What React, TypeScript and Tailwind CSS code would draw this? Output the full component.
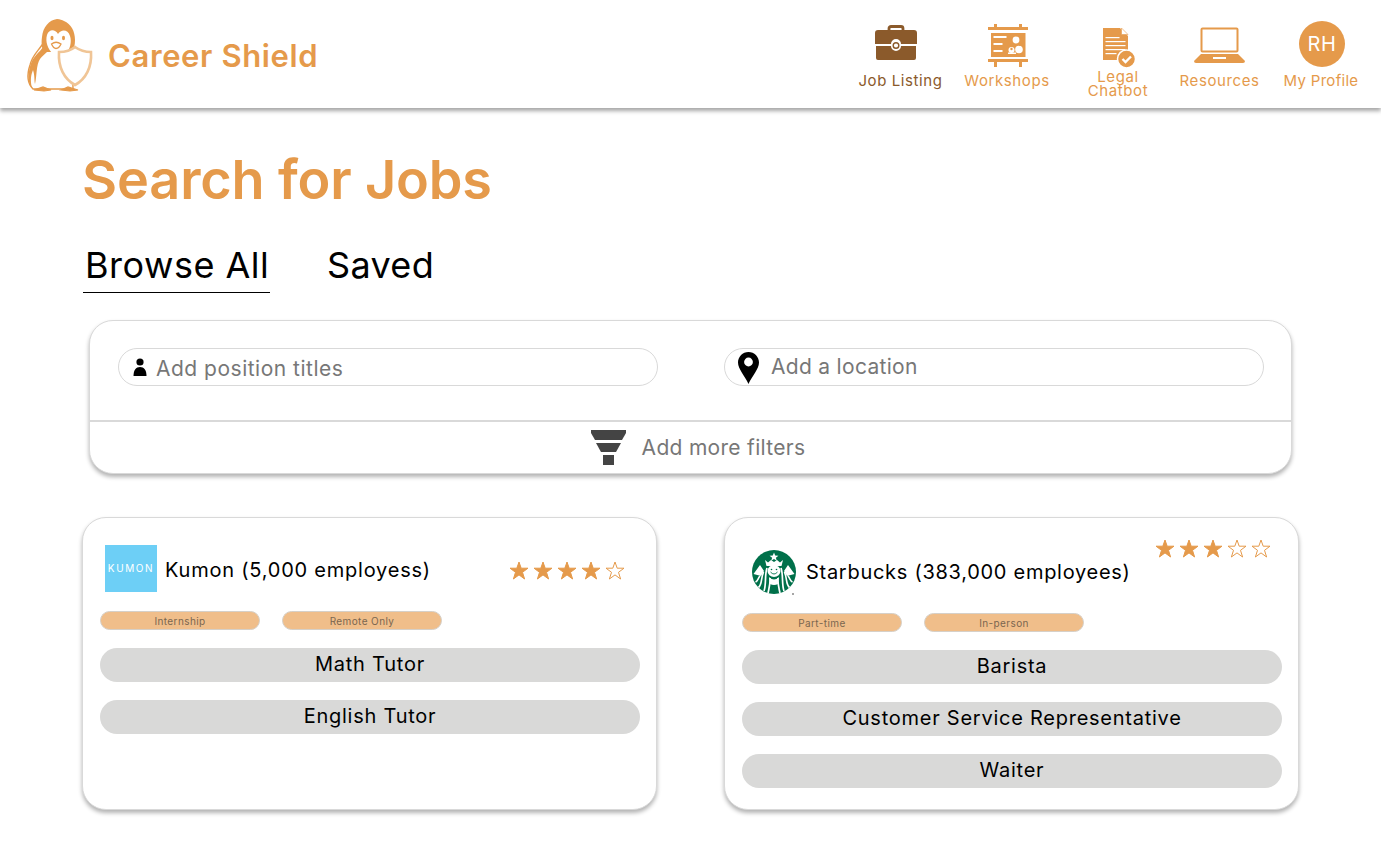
import React from "react";

const F = "[font-family:Inter,'Liberation_Sans',sans-serif]";
const OR = "#E59A4B";

function Penguin() {
  return (
    <svg width="80" height="90" viewBox="0 0 80 90" className="shrink-0">
      <path d="M22 36 C18 42 12 47 10 56 C7 65 7 74 13 80 L53 80 L52 30Z" fill="#fff" stroke={OR} strokeWidth="1.4" />
      <path d="M37 10 C40 10 42 11 44 12 C51 15 55 22 55 31 C55 36 54 40 52 43 L24 43 C22 40 21 35 22 28 C23 18 29 11 37 10Z" fill={OR} />
      <path d="M38 25 C35 20 29 20 27 26 C25 33 28 40 33 45 H46 C50 40 52 33 50 27 C48 20 41 20 38 25Z" fill="#fff" />
      <ellipse cx="32" cy="29" rx="1.5" ry="2.3" fill={OR} />
      <ellipse cx="43.5" cy="29" rx="1.5" ry="2.3" fill={OR} />
      <path d="M31.5 35 Q36 31.5 41 35 Q39 39.5 36 39.5 Q33.5 39.5 31.5 35Z" fill="#fff" stroke={OR} strokeWidth="1.3" />
      <path d="M23 38 C20 43 13 47 10.5 56 C8 64 7 73 12 79 C10 71 11 66 13 61 C15 67 14 71 15 75 C17 66 16 56 20 50 C22 47 25 45 27 43Z" fill={OR} />
      <path d="M14 81 L23 78 L31 81 L24 82Z M41 81 L48 78 L58 81 L50 82Z" fill={OR} stroke={OR} strokeWidth="1.2" />
      <path d="M39 43 Q49 43 55 38 Q62 43 71 43 C72 58 66 70 55 76 C44 70 38 58 39 43Z" fill="#fff" stroke="#F0C596" strokeWidth="2.6" />
    </svg>
  );
}

function Briefcase() {
  return (
    <svg width="42" height="35" viewBox="0 0 42 35">
      <path d="M14 6 V3.5 a2 2 0 0 1 2-2 h10 a2 2 0 0 1 2 2 V6" fill="none" stroke="#8B5A2B" strokeWidth="2.8" />
      <path d="M3 5 H39 a3 3 0 0 1 3 3 V19 H26 a5 5 0 0 0-10 0 H0 V8 a3 3 0 0 1 3-3Z" fill="#8B5A2B" />
      <path d="M1 21 H16 a5 5 0 0 0 10 0 H41 V33 a2 2 0 0 1-2 2 H3 a2 2 0 0 1-2-2Z" fill="#8B5A2B" />
      <circle cx="21" cy="20.5" r="2.8" fill="#fff" stroke="#8B5A2B" strokeWidth="1.4" />
    </svg>
  );
}

function Board() {
  return (
    <svg width="40" height="43" viewBox="0 0 40 43" fill={OR}>
      <rect x="6" y="0" width="3" height="4" />
      <rect x="31" y="0" width="3" height="4" />
      <rect x="0" y="3" width="40" height="3" />
      <rect x="3" y="9" width="34.5" height="24" />
      <rect x="0" y="35" width="40" height="3" />
      <rect x="6" y="38" width="3" height="5" />
      <rect x="31" y="38" width="3" height="5" />
      <g fill="#fff">
        <rect x="5.5" y="12" width="13" height="2" />
        <rect x="5.5" y="19" width="9" height="2" />
        <rect x="5.5" y="26" width="9" height="2" />
        <circle cx="28" cy="16" r="3.4" />
        <circle cx="23.5" cy="26" r="3" />
        <circle cx="31" cy="25.5" r="3.8" />
        <rect x="20" y="28.5" width="8" height="1.5" />
      </g>
      <circle cx="23.5" cy="25" r="1.2" />
      <path d="M26 19 L23.5 23 M30 19 L32 22" stroke={OR} strokeWidth="1" />
    </svg>
  );
}

function Doc() {
  return (
    <svg width="34" height="42" viewBox="0 0 34 42">
      <path d="M1 1 H18 L26 9 V33 H1 Z" fill={OR} />
      <path d="M19.5 1 L26 7.5 H19.5Z" fill="#fff" stroke={OR} strokeWidth="0.6" />
      <g fill="#fff">
        <rect x="3.5" y="10" width="14" height="1.2" />
        <rect x="3.5" y="14" width="20" height="1.2" />
        <rect x="3.5" y="18" width="20" height="1.2" />
        <rect x="3.5" y="22" width="20" height="1.2" />
        <rect x="3.5" y="26" width="11" height="1.2" />
      </g>
      <circle cx="24.5" cy="32" r="9" fill={OR} stroke="#fff" strokeWidth="1.5" />
      <path d="M20.5 32 L23.5 35 L29 29.5" fill="none" stroke="#fff" strokeWidth="2.4" />
    </svg>
  );
}

function Laptop() {
  return (
    <svg width="51" height="36" viewBox="0 0 51 36">
      <rect x="7.5" y="1.5" width="36" height="23" rx="1" fill="none" stroke={OR} strokeWidth="2" />
      <path d="M7 27 H44 L51 34 Q51 36 49 36 H2 Q0 36 0 34Z" fill={OR} />
      <rect x="19" y="30" width="13" height="2" fill="#fff" />
    </svg>
  );
}

function Star({ filled }: { filled: boolean }) {
  return (
    <svg width="20" height="19" viewBox="0 0 20 19">
      <polygon
        points="10,1 12.2,7.2 19,7.2 13.5,11.3 15.6,18 10,13.9 4.4,18 6.5,11.3 1,7.2 7.8,7.2"
        fill={filled ? OR : "#fff"}
        stroke={OR}
        strokeWidth="1"
      />
    </svg>
  );
}

function Stars({ n, className }: { n: number; className: string }) {
  return (
    <div className={`flex gap-1 ${className}`}>
      {[0, 1, 2, 3, 4].map((i) => (
        <Star key={i} filled={i < n} />
      ))}
    </div>
  );
}

function Starbucks() {
  return (
    <svg width="46" height="46" viewBox="0 0 46 46" className="shrink-0">
      <circle cx="22" cy="22" r="22" fill="#00704A" />
      <polygon points="22,2.5 23.2,5.5 26.4,5.7 23.9,7.7 24.8,10.8 22,9 19.2,10.8 20.1,7.7 17.6,5.7 20.8,5.5" fill="#fff" />
      <path d="M13 10 L16 12.5 L19 10 L22 12 L25 10 L28 12.5 L31 10 L29.5 16 H14.5Z" fill="#fff" />
      <path d="M1.5 24 L8 15 L12 21 L9 26Z M42.5 24 L36 15 L32 21 L35 26Z" fill="#fff" />
      <ellipse cx="22" cy="21" rx="6.5" ry="6" fill="#fff" />
      <path d="M15 18 C12.5 25 14.5 34 12 41 M29 18 C31.5 25 29.5 34 32 41 M11.5 22 C8.5 29 10.5 34 6.5 37.5 M32.5 22 C35.5 29 33.5 34 37.5 37.5 M18 28 C18.5 34 17 38 16 43 M26 28 C25.5 34 27 38 28 43 M8 26 C5.5 29 6 31 3.5 32 M36 26 C38.5 29 38 31 40.5 32" fill="none" stroke="#fff" strokeWidth="1.7" />
      <path d="M17 27 Q22 32 27 27 L26 34 Q22 36 18 34Z" fill="#fff" />
      <path d="M18.5 22 Q22 26 25.5 22" fill="none" stroke="#00704A" strokeWidth="0.9" />
      <circle cx="19.5" cy="19.5" r="0.8" fill="#00704A" />
      <circle cx="24.5" cy="19.5" r="0.8" fill="#00704A" />
      <circle cx="41" cy="44" r="1" fill="#888" />
    </svg>
  );
}

function Tag({ children }: { children: React.ReactNode }) {
  return (
    <div className="w-40 h-[19px] rounded-full bg-[#F0BE8A] border border-[#d6d0c8] flex items-center justify-center pt-[2px] text-[10px] text-[#7a6650] tracking-[0.4px]">
      {children}
    </div>
  );
}

function JobPill({ children }: { children: React.ReactNode }) {
  return (
    <div className="w-[540px] h-[34px] rounded-full bg-[#D9D9D8] flex items-center justify-center pb-[2px] text-[20px] text-black tracking-[0.75px]">
      {children}
    </div>
  );
}

const cardCls =
  "h-[293px] rounded-[24px] border border-[#d9d9d9] bg-white shadow-[0_3px_4px_rgba(0,0,0,0.3)] pt-[27px] pl-[17px]";

const navCls = "flex flex-col items-center h-[108px] text-[15px] leading-[14px] tracking-[0.6px]";

export default function App() {
  return (
    <div className={`${F} w-[1381px] h-[843px] bg-white overflow-hidden`}>
      <header className="h-[108px] bg-white shadow-[0_3px_4px_rgba(0,0,0,0.35)] flex items-center pl-5 pr-[2px]">
        <Penguin />
        <div className="ml-2 pt-[5px] text-[31px] font-semibold text-[#E59A4B] tracking-[0.62px]">Career Shield</div>
        <nav className="ml-auto flex text-[#E59A4B]">
          <div className={`${navCls} w-[107px] text-[#8B5A2B]`}>
            <div className="h-[74px] pt-[25px] pr-[9px]"><Briefcase /></div>
            <span>Job Listing</span>
          </div>
          <div className={`${navCls} w-[106px]`}>
            <div className="h-[74px] pt-6 pl-[2px]"><Board /></div>
            <span>Workshops</span>
          </div>
          <div className={`${navCls} w-[116px]`}>
            <div className="h-[70px] pt-[27px] pl-[2px]"><Doc /></div>
            <span className="text-center">Legal<br />Chatbot</span>
          </div>
          <div className={`${navCls} w-[87px]`}>
            <div className="h-[74px] pt-[27px]"><Laptop /></div>
            <span>Resources</span>
          </div>
          <div className={`${navCls} w-[116px]`}>
            <div className="h-[74px] pt-[21px] pl-[2px]">
              <div className="w-[46px] h-[46px] rounded-full bg-[#E59A4B] flex items-center justify-center text-white text-[20px] font-normal">RH</div>
            </div>
            <span className="tracking-[0.3px]">My Profile</span>
          </div>
        </nav>
      </header>

      <main className="pl-[83px]">
        <h1 className="mt-[39px] h-[66px] -ml-[1px] text-[54px] leading-[66px] font-semibold text-[#E59A4B] tracking-[-0.15px]">Search for Jobs</h1>

        <div className="mt-[30px] flex text-[36px] leading-[44px] text-black">
          <div className="w-[187px] h-[50px] pl-[2px] border-b border-black tracking-[0.5px]">Browse All</div>
          <div className="ml-[57px] tracking-[0.35px]">Saved</div>
        </div>

        <section className="ml-[6px] mt-[27px] w-[1203px] h-[154px] rounded-[24px] border border-[#d9d9d9] bg-white shadow-[0_3px_4px_rgba(0,0,0,0.3)] flex flex-col">
          <div className="h-[101px] pt-[27px] pl-7 flex gap-[66px] border-b-2 border-[#d9d9d9]">
            <div className="w-[540px] h-[38px] rounded-full border border-[#d9d9d9] flex items-center pl-[14px] gap-[9px] text-[21px] text-[#777] tracking-[0.5px]">
              <svg width="14" height="18" viewBox="0 0 14 18" fill="#000">
                <circle cx="7" cy="4" r="3.6" />
                <path d="M0.5 18 C0.5 12 3 9 7 9 C11 9 13.5 12 13.5 18Z" />
              </svg>
              <span className="mt-1">Add position titles</span>
            </div>
            <div className="w-[540px] h-[38px] rounded-full border border-[#d9d9d9] flex items-center pl-[13px] gap-3 text-[21px] text-[#777] tracking-[0.3px]">
              <svg width="21" height="32" viewBox="0 0 21 32" className="mt-[1px]">
                <path d="M10.5 0 C4.7 0 0 4.7 0 10.5 C0 17 7 24 10.5 32 C14 24 21 17 21 10.5 C21 4.7 16.3 0 10.5 0Z" fill="#000" />
                <circle cx="10.5" cy="10" r="4.4" fill="#fff" />
              </svg>
              <span>Add a location</span>
            </div>
          </div>
          <div className="flex-1 flex items-center justify-center gap-4 pl-[15px] text-[21px] text-[#777] tracking-[0.3px]">
            <svg width="35" height="35" viewBox="0 0 35 35" fill="#444">
              <path d="M0 0 H35 V3 L31 10 H4 L0 3Z" />
              <path d="M5 13 H30 L25 22 H10Z" />
              <rect x="12" y="25" width="11" height="10" />
            </svg>
            <span>Add more filters</span>
          </div>
        </section>

        <div className="mt-[43px] -ml-[1px] flex gap-[67px]">
          <article className={`w-[575px] ${cardCls}`}>
            <div className="flex h-[47px]">
              <div className="ml-[5px] w-[52px] h-[47px] bg-[#6DCFF6] flex items-center justify-center text-white text-[10px] tracking-[1.6px]">KUMON</div>
              <div className="ml-2 h-[49px] flex items-center text-[20px] text-black tracking-[0.78px]">Kumon (5,000 employess)</div>
              <Stars n={4} className="ml-auto mr-[31px] mt-4" />
            </div>
            <div className="mt-[19px] flex gap-[22px]">
              <Tag>Internship</Tag>
              <Tag>Remote Only</Tag>
            </div>
            <div className="mt-[18px] flex flex-col gap-[18px]">
              <JobPill>Math Tutor</JobPill>
              <JobPill>English Tutor</JobPill>
            </div>
          </article>

          <article className={`w-[575px] ${cardCls}`}>
            <div className="flex h-[49px]">
              <div className="ml-[10px] mt-[5px]"><Starbucks /></div>
              <div className="ml-2 h-[53px] flex items-center text-[20px] text-black tracking-[0.72px]">Starbucks (383,000 employees)</div>
              <Stars n={3} className="ml-auto mr-[27px] -mt-[6px]" />
            </div>
            <div className="mt-[19px] flex gap-[22px]">
              <Tag>Part-time</Tag>
              <Tag>In-person</Tag>
            </div>
            <div className="mt-[18px] flex flex-col gap-[18px]">
              <JobPill>Barista</JobPill>
              <JobPill>Customer Service Representative</JobPill>
              <JobPill>Waiter</JobPill>
            </div>
          </article>
        </div>
      </main>
    </div>
  );
}
